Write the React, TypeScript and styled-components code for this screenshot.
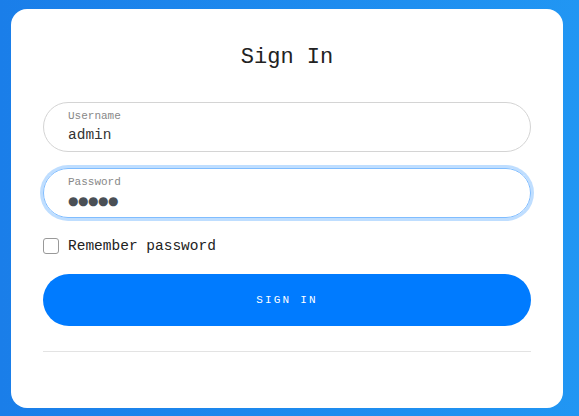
import React from "react";
import styled, { createGlobalStyle } from "styled-components";

const Global = createGlobalStyle`
  html, body { margin: 0; padding: 0; }
  body {
    width: 579px;
    height: 416px;
    overflow: hidden;
    background: linear-gradient(90deg, #1a7ee9 0%, #2196f3 100%);
    font-family: "Liberation Mono", "DejaVu Sans Mono", monospace;
  }
`;

const Page = styled.div`
  box-sizing: border-box;
  width: 579px;
  height: 416px;
  padding: 9px 16px 8px 11px;
  display: flex;
`;

const Card = styled.div`
  flex: 1;
  background: #fff;
  border-radius: 16px;
  padding: 34px 32px 0 32px;
  display: flex;
  flex-direction: column;
`;

const Title = styled.h1`
  margin: 0 0 29px 0;
  text-align: center;
  font-weight: normal;
  font-size: 22px;
  line-height: 30px;
  color: #222;
  letter-spacing: 0;
`;

const Field = styled.div<{ $focused?: boolean }>`
  box-sizing: border-box;
  height: 50px;
  border-radius: 25px;
  border: 1px solid ${(p) => (p.$focused ? "#80bdff" : "#d4d4d4")};
  box-shadow: ${(p) => (p.$focused ? "0 0 0 3px rgba(0,123,255,0.25)" : "none")};
  padding: 6px 24px 0 24px;
  display: flex;
  flex-direction: column;
  margin-bottom: 16px;
`;

const Label = styled.span`
  font-size: 11px;
  line-height: 14px;
  color: #888;
`;

const Value = styled.span`
  font-size: 14.5px;
  line-height: 24px;
  color: #333;
`;

const Dots = styled.span`
  font-size: 12px;
  line-height: 24px;
  color: #4a4f55;
  letter-spacing: -0.5px;
  font-family: "DejaVu Sans", sans-serif;
`;

const CheckRow = styled.label`
  display: flex;
  align-items: center;
  gap: 9px;
  margin-top: 4px;
  font-size: 14.5px;
  color: #222;
`;

const Box = styled.span`
  box-sizing: border-box;
  width: 16px;
  height: 16px;
  border: 1px solid #999;
  border-radius: 3px;
  background: #fff;
`;

const Button = styled.button`
  margin-top: 20px;
  height: 52px;
  border: none;
  border-radius: 26px;
  background: #007bff;
  color: #fff;
  font-family: inherit;
  font-size: 11px;
  letter-spacing: 2.2px;
  text-transform: uppercase;
`;

const Divider = styled.hr`
  margin: 25px 0 0 0;
  border: none;
  border-top: 1px solid #e3e3e3;
`;

export default function App() {
  return (
    <>
      <Global />
      <Page>
        <Card>
          <Title>Sign In</Title>
          <Field>
            <Label>Username</Label>
            <Value>admin</Value>
          </Field>
          <Field $focused>
            <Label>Password</Label>
            <Dots>●●●●●</Dots>
          </Field>
          <CheckRow>
            <Box />
            Remember password
          </CheckRow>
          <Button>Sign In</Button>
          <Divider />
        </Card>
      </Page>
    </>
  );
}
